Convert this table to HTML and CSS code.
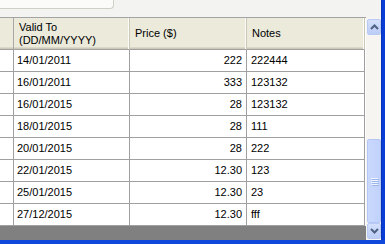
FILE: index.html
```html
<!DOCTYPE html>
<html>
<head>
<meta charset="utf-8">
<link rel="stylesheet" href="styles.css">
</head>
<body>
<div class="window">
  <div class="main">
    <div class="content">
      <div class="top"><div class="groupbox"></div></div>
      <div class="body">
        <div class="pane">
          <div class="grid">
            <div class="hc rh"></div>
            <div class="hc two">Valid To<br>(DD/MM/YYYY)</div>
            <div class="hc">Price ($)</div>
            <div class="hc">Notes</div>

            <div class="c rh"></div><div class="c d">14/01/2011</div><div class="c p">222</div><div class="c n">222444</div>
            <div class="c rh"></div><div class="c d">16/01/2011</div><div class="c p">333</div><div class="c n">123132</div>
            <div class="c rh"></div><div class="c d">16/01/2015</div><div class="c p">28</div><div class="c n">123132</div>
            <div class="c rh"></div><div class="c d">18/01/2015</div><div class="c p">28</div><div class="c n">111</div>
            <div class="c rh"></div><div class="c d">20/01/2015</div><div class="c p">28</div><div class="c n">222</div>
            <div class="c rh"></div><div class="c d">22/01/2015</div><div class="c p">12.30</div><div class="c n">123</div>
            <div class="c rh"></div><div class="c d">25/01/2015</div><div class="c p">12.30</div><div class="c n">23</div>
            <div class="c rh"></div><div class="c d">27/12/2015</div><div class="c p">12.30</div><div class="c n">fff</div>
          </div>
        </div>
        <div class="vscroll">
          <div class="sbtn"><svg width="9" height="6" viewBox="0 0 9 6"><polyline points="1,5 4.5,1.5 8,5" fill="none" stroke="#4d6185" stroke-width="2"/></svg></div>
          <div class="track"></div>
          <div class="thumb"><div class="grip"><i></i><i></i><i></i><i></i></div></div>
          <div class="sbtn"><svg width="9" height="6" viewBox="0 0 9 6"><polyline points="1,1 4.5,4.5 8,1" fill="none" stroke="#4d6185" stroke-width="2"/></svg></div>
        </div>
      </div>
    </div>
    <div class="frame-r"></div>
  </div>
  <div class="frame-b"></div>
</div>
</body>
</html>
```
FILE: styles.css
```css
html, body {
  margin: 0;
  padding: 0;
}
body {
  font-family: "Liberation Sans", Arial, sans-serif;
  font-size: 11px;
  color: #000;
  background: #fff;
}
.window {
  width: 385px;
  height: 244px;
  display: flex;
  flex-direction: column;
  overflow: hidden;
}
.main {
  flex: 1;
  display: flex;
  min-height: 0;
}
.content {
  flex: 1;
  display: flex;
  flex-direction: column;
  min-width: 0;
}
.frame-r {
  width: 4px;
  background: #0a3dd6;
  box-shadow: inset 1px 0 0 #0832b8;
}
.frame-b {
  height: 4px;
  background: #1048dc;
}
.top {
  height: 17px;
  background: #f3f3f1;
}
.groupbox {
  width: 113px;
  height: 8px;
  background: #fbfbfa;
  border-right: 1px solid #cfcfc6;
  border-bottom: 1px solid #cfcfc6;
  border-bottom-right-radius: 4px;
}
.body {
  flex: 1;
  display: flex;
  min-height: 0;
}
.pane {
  width: 366px;
  background: #808080;
  border-top: 1px solid #a3a3a3;
}
.grid {
  display: grid;
  grid-template-columns: 14px 116px 117px 118px;
  grid-template-rows: 32px;
  grid-auto-rows: 22px;
  background: #fff;
}
.hc, .c {
  box-sizing: border-box;
  white-space: nowrap;
  overflow: hidden;
}
.hc {
  background: #ebeadb;
  border-right: 1px solid #c9c7b6;
  border-bottom: 1px solid #a0a0a0;
  box-shadow: inset -1px 0 0 #fbfbf7, inset 0 -1px 0 #cdc9b9, inset 0 -2px 0 #dcd8c8;
  padding: 0 5px;
  display: flex;
  align-items: center;
  line-height: 13px;
}
.hc.rh {
  border-right: 1px solid #a8a8a8;
  box-shadow: inset 0 -1px 0 #cdc9b9, inset 0 -2px 0 #dcd8c8;
  padding: 0;
}
.hc.two {
  display: block;
  padding-top: 3px;
}
.c {
  background: #fff;
  border-right: 1px solid #a0a0a0;
  border-bottom: 1px solid #a0a0a0;
  line-height: 21px;
  padding: 0 4px;
}
.c.rh {
  padding: 0;
}
.c.d {
  padding-left: 3px;
}
.c.p {
  text-align: right;
}
.vscroll {
  width: 15px;
  box-sizing: border-box;
  padding: 2px 0 1px 1px;
  display: flex;
  flex-direction: column;
  background: #f6f5f1;
}
.sbtn {
  height: 16px;
  width: 14px;
  box-sizing: border-box;
  border: 1px solid #b9cbf5;
  border-radius: 2px;
  background: linear-gradient(#d4e0fb, #bccdf6);
  display: flex;
  align-items: center;
  justify-content: center;
}
.track {
  height: 104px;
}
.thumb {
  flex: 1;
  width: 14px;
  box-sizing: border-box;
  border: 1px solid #b3c6f4;
  border-radius: 2px;
  background: linear-gradient(90deg, #c9d8fc, #c1d2fb);
  display: flex;
  align-items: center;
  justify-content: center;
}
.grip {
  display: flex;
  flex-direction: column;
  gap: 1px;
}
.grip i {
  display: block;
  width: 7px;
  height: 1px;
  background: #eef3ff;
  box-shadow: 1px 1px 0 #9cb6ef;
}
```
